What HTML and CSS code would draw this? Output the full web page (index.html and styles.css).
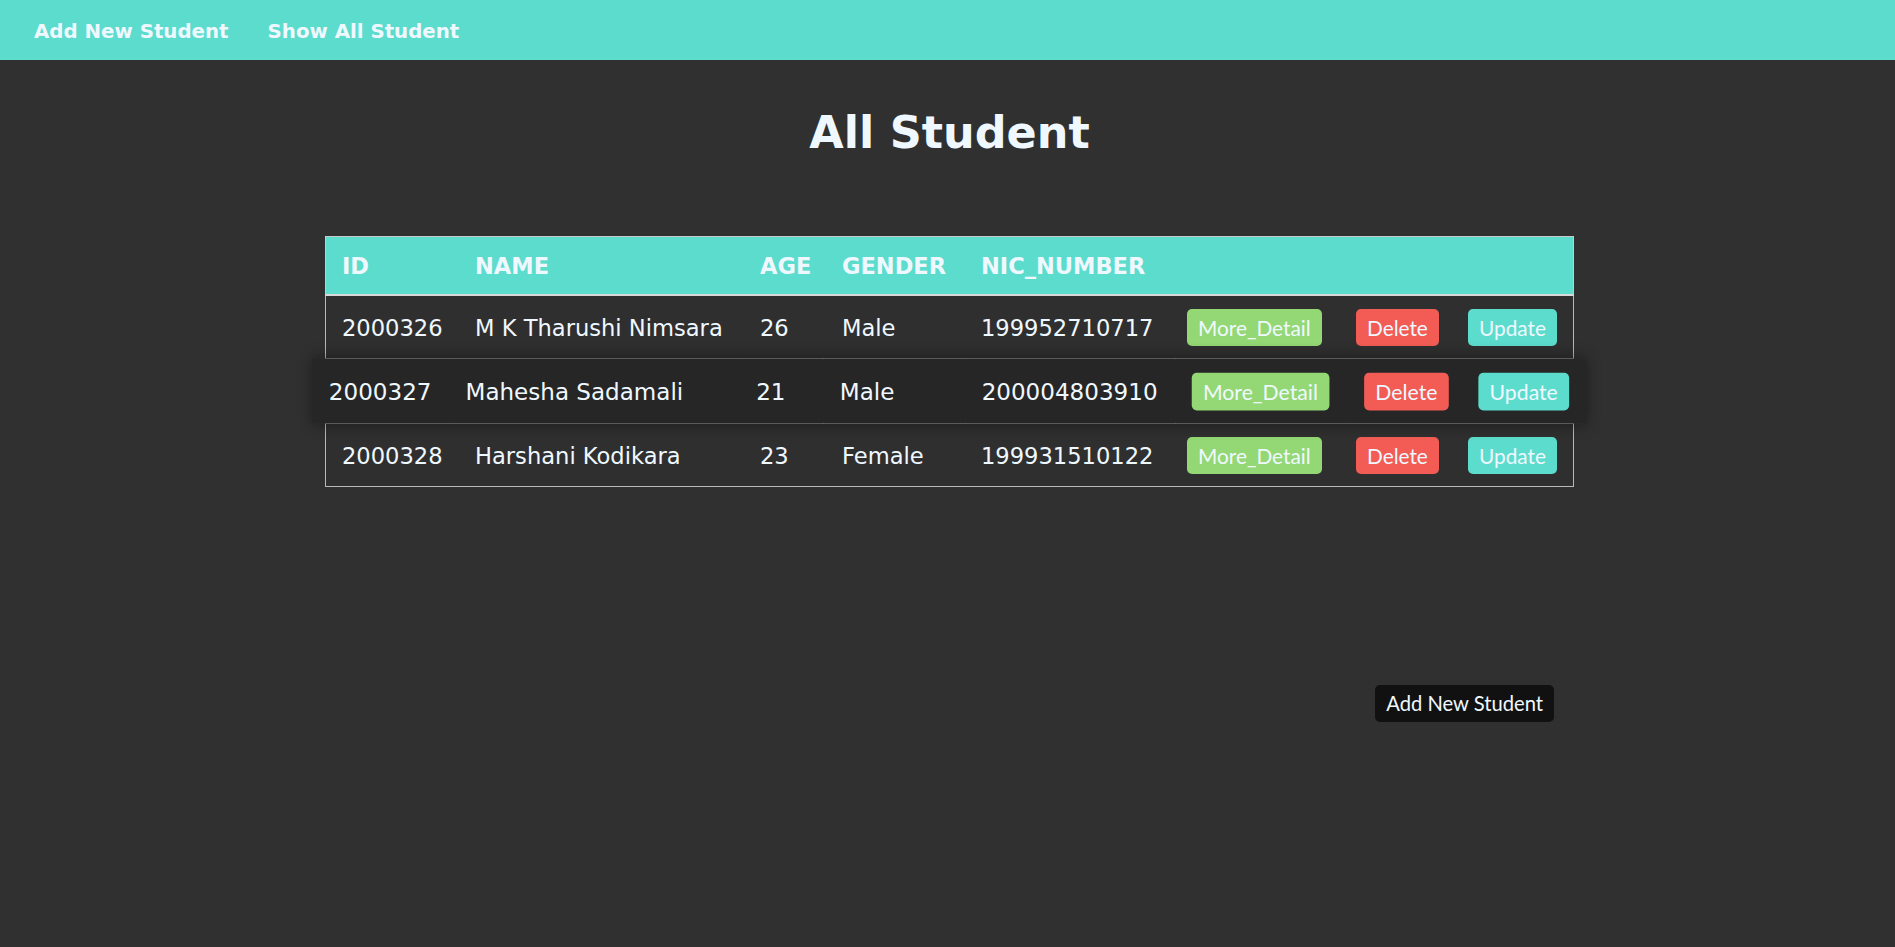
FILE: index.html
```html
<!DOCTYPE html>
<html lang="en">
<head>
<meta charset="utf-8">
<title>All Student</title>
<link rel="stylesheet" href="styles.css">
</head>
<body>
<nav class="topbar">
  <a class="topbar-link" href="#">Add New Student</a>
  <a class="topbar-link" href="#">Show All Student</a>
</nav>
<main class="page">
  <h1 class="page-title">All Student</h1>
  <table class="students">
    <colgroup>
      <col class="c-id"><col class="c-name"><col class="c-age"><col class="c-gender"><col class="c-nic"><col class="c-more"><col class="c-del"><col class="c-upd">
    </colgroup>
    <thead>
      <tr>
        <th>ID</th><th>NAME</th><th>AGE</th><th>GENDER</th><th>NIC_NUMBER</th><th></th><th></th><th></th>
      </tr>
    </thead>
    <tbody>
      <tr class="row">
        <td>2000326</td><td>M K Tharushi Nimsara</td><td>26</td><td>Male</td><td>199952710717</td>
        <td><button class="btn btn-more">More_Detail</button></td>
        <td><button class="btn btn-del">Delete</button></td>
        <td><button class="btn btn-upd">Update</button></td>
      </tr>
      <tr class="row row-hover">
        <td>2000327</td><td>Mahesha Sadamali</td><td>21</td><td>Male</td><td>200004803910</td>
        <td><button class="btn btn-more">More_Detail</button></td>
        <td><button class="btn btn-del">Delete</button></td>
        <td><button class="btn btn-upd">Update</button></td>
      </tr>
      <tr class="row row-last">
        <td>2000328</td><td>Harshani Kodikara</td><td>23</td><td>Female</td><td>199931510122</td>
        <td><button class="btn btn-more">More_Detail</button></td>
        <td><button class="btn btn-del">Delete</button></td>
        <td><button class="btn btn-upd">Update</button></td>
      </tr>
    </tbody>
  </table>
  <div class="hint-wrap">
    <span class="hint">Add New Student</span>
  </div>
</main>
</body>
</html>
```
FILE: styles.css
```css
html, body {
  margin: 0;
  padding: 0;
}
body {
  background: #303030;
  color: #f0f8ff;
  font-family: "DejaVu Sans", Verdana, sans-serif;
  min-height: 947px;
}
.topbar {
  height: 60px;
  background: #5cdccc;
  display: flex;
  align-items: center;
  gap: 39px;
  padding-left: 34px;
  box-sizing: border-box;
}
.topbar-link {
  color: #f0f8ff;
  text-decoration: none;
  font-weight: bold;
  font-size: 19.8px;
  padding-top: 2px;
}
.page {
  display: flex;
  flex-direction: column;
  align-items: center;
  padding-left: 4px;
}
.page-title {
  margin: 47px 0 0;
  font-size: 44.5px;
  font-weight: bold;
  line-height: 52px;
  color: #f0f8ff;
}
.students {
  margin-top: 77px;
  width: 1249px;
  table-layout: fixed;
  border-collapse: separate;
  border-spacing: 0;
  font-size: 22.6px;
}
.c-id { width: 134px; }
.c-name { width: 285px; }
.c-age { width: 82px; }
.c-gender { width: 139px; }
.c-nic { width: 206px; }
.c-more { width: 169px; }
.c-del { width: 112px; }
.c-upd { width: 122px; }

.students th {
  background: #5cdccc;
  color: #f0f8ff;
  text-align: left;
  font-size: 22.5px;
  font-weight: bold;
  height: 57px;
  padding: 0 0 0 16px;
  border-top: 1px solid #c9c9c9;
  border-bottom: 2px solid #d8d8d8;
  white-space: nowrap;
}
.students th:first-child { border-left: 1px solid #c9c9c9; }
.students th:last-child { border-right: 1px solid #c9c9c9; }

.students td {
  padding: 1px 0 0 16px;
  height: 61px;
  border-bottom: 1px solid #b8b8b8;
  white-space: nowrap;
  background: #2f2f2f;
}
.students td:first-child { border-left: 1px solid #b8b8b8; }
.students td:last-child { border-right: 1px solid #b8b8b8; }
.row-last td { border-top: 1px solid #b8b8b8; }

.row-hover {
  transform: scale(1.02);
  box-shadow: 0 0 14px rgba(0, 0, 0, 0.45);
  position: relative;
}
.row-hover td {
  background: #262626;
  border: none;
  height: 63px;
}
.row-hover td:first-child, .row-hover td:last-child { border: none; }

.btn {
  font-family: Lato, "Open Sans", sans-serif;
  font-size: 20.8px;
  color: #f0f8ff;
  border: none;
  border-radius: 5px;
  height: 37px;
  padding: 0 11px;
  cursor: pointer;
}
.btn-more { background: #93d874; }
.btn-del { background: #f25c54; }
.btn-upd { background: #5cdccc; }

.hint-wrap {
  width: 1249px;
  display: flex;
  justify-content: flex-end;
  padding-right: 20px;
  box-sizing: border-box;
  margin-top: 198px;
}
.hint {
  background: #111111;
  color: #f0f8ff;
  font-family: Lato, "Open Sans", sans-serif;
  font-size: 20.2px;
  border-radius: 5px;
  height: 37px;
  line-height: 37px;
  padding: 0 11px;
}
```
